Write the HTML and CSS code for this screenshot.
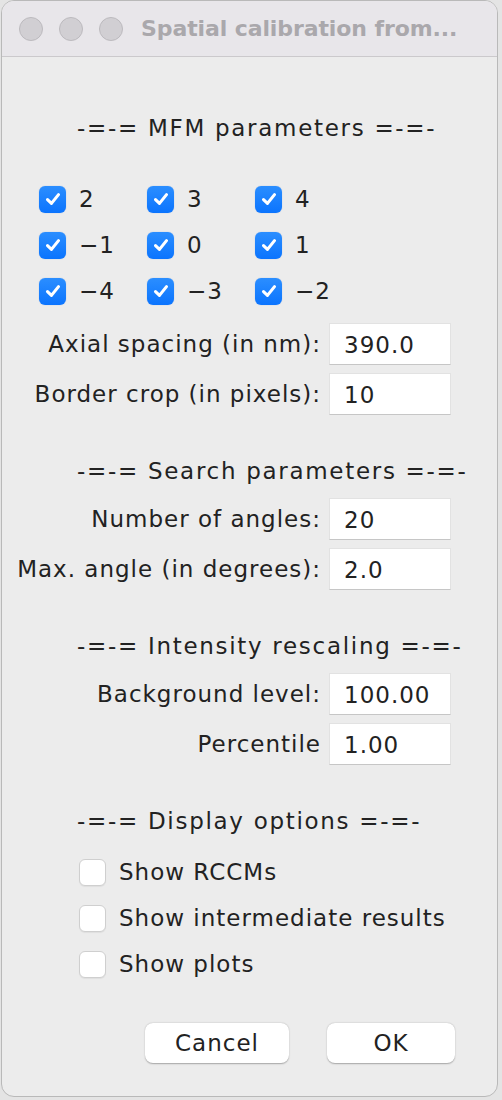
FILE: index.html
```html
<!DOCTYPE html>
<html>
<head>
<meta charset="utf-8">
<link rel="stylesheet" href="styles.css">
</head>
<body>
<div class="window">
  <div class="titlebar">
    <span class="light"></span><span class="light"></span><span class="light"></span>
    <span class="title">Spatial calibration from...</span>
  </div>
  <div class="content">
    <div class="heading h1">-=-= MFM parameters =-=-</div>
    <div class="checkgrid">
      <label class="cb"><span class="box on"><svg viewBox="0 0 20 20"><path d="M5 10.5 L8.6 14 L15 6" /></svg></span>2</label>
      <label class="cb"><span class="box on"><svg viewBox="0 0 20 20"><path d="M5 10.5 L8.6 14 L15 6" /></svg></span>3</label>
      <label class="cb"><span class="box on"><svg viewBox="0 0 20 20"><path d="M5 10.5 L8.6 14 L15 6" /></svg></span>4</label>
      <label class="cb"><span class="box on"><svg viewBox="0 0 20 20"><path d="M5 10.5 L8.6 14 L15 6" /></svg></span>−1</label>
      <label class="cb"><span class="box on"><svg viewBox="0 0 20 20"><path d="M5 10.5 L8.6 14 L15 6" /></svg></span>0</label>
      <label class="cb"><span class="box on"><svg viewBox="0 0 20 20"><path d="M5 10.5 L8.6 14 L15 6" /></svg></span>1</label>
      <label class="cb"><span class="box on"><svg viewBox="0 0 20 20"><path d="M5 10.5 L8.6 14 L15 6" /></svg></span>−4</label>
      <label class="cb"><span class="box on"><svg viewBox="0 0 20 20"><path d="M5 10.5 L8.6 14 L15 6" /></svg></span>−3</label>
      <label class="cb"><span class="box on"><svg viewBox="0 0 20 20"><path d="M5 10.5 L8.6 14 L15 6" /></svg></span>−2</label>
    </div>
    <div class="fields f1">
      <span class="lbl">Axial spacing (in nm):</span><span class="field">390.0</span>
      <span class="lbl">Border crop (in pixels):</span><span class="field">10</span>
    </div>
    <div class="heading h2">-=-= Search parameters =-=-</div>
    <div class="fields">
      <span class="lbl">Number of angles:</span><span class="field">20</span>
      <span class="lbl">Max. angle (in degrees):</span><span class="field">2.0</span>
    </div>
    <div class="heading h2">-=-= Intensity rescaling =-=-</div>
    <div class="fields">
      <span class="lbl">Background level:</span><span class="field">100.00</span>
      <span class="lbl">Percentile</span><span class="field">1.00</span>
    </div>
    <div class="heading h2">-=-= Display options =-=-</div>
    <div class="options">
      <label class="cb"><span class="box off"></span>Show RCCMs</label>
      <label class="cb"><span class="box off"></span>Show intermediate results</label>
      <label class="cb"><span class="box off"></span>Show plots</label>
    </div>
    <div class="buttons">
      <span class="btn cancel">Cancel</span>
      <span class="btn ok">OK</span>
    </div>
  </div>
</div>
</body>
</html>
```
FILE: styles.css
```css
html, body {
  margin: 0;
  padding: 0;
  background: #e4e4e4;
}
body {
  width: 502px;
  height: 1100px;
  overflow: hidden;
  font-family: "DejaVu Sans", "Noto Sans", sans-serif;
  color: #222;
}
.window {
  margin-left: 1px;
  width: 497px;
  height: 1097px;
  background: #ececec;
  border: 1px solid #b9b9b9;
  border-radius: 13px;
  overflow: hidden;
  box-sizing: border-box;
  display: flex;
  flex-direction: column;
}
.titlebar {
  height: 56px;
  flex: none;
  background: #e8e6ea;
  border-bottom: 1px solid #cbc9cc;
  box-sizing: border-box;
  display: flex;
  align-items: center;
  padding-left: 17px;
}
.light {
  width: 24px;
  height: 24px;
  border-radius: 50%;
  background: #d1cfd3;
  border: 1px solid #bcbabe;
  box-sizing: border-box;
  margin-right: 16px;
}
.title {
  margin-left: 2px;
  font-weight: bold;
  font-size: 22px;
  color: #aaa8ac;
  letter-spacing: -0.1px;
}
.content {
  display: flex;
  flex-direction: column;
  font-size: 23px;
  letter-spacing: 1px;
}
.heading {
  height: 30px;
  line-height: 30px;
  padding-left: 75px;
  letter-spacing: 1.7px;
}
.h1 { margin-top: 56px; }
.h2 { margin-top: 41px; }
.checkgrid {
  margin-top: 33px;
  display: grid;
  grid-template-columns: 108px 108px 108px;
  grid-auto-rows: 46px;
  padding-left: 37px;
}
.cb {
  display: flex;
  align-items: center;
  height: 46px;
}
.box {
  width: 27px;
  height: 27px;
  border-radius: 6px;
  box-sizing: border-box;
  margin-right: 13px;
  flex: none;
  display: flex;
  align-items: center;
  justify-content: center;
}
.box.on {
  background: linear-gradient(#2b8eff, #0b74fe);
  box-shadow: 0 0 1px rgba(0, 80, 200, 0.4);
}
.box svg {
  width: 22px;
  height: 22px;
}
.box svg path {
  fill: none;
  stroke: #fff;
  stroke-width: 2.8;
  stroke-linecap: round;
  stroke-linejoin: round;
}
.box.off {
  background: #fff;
  border: 1px solid #cfcfcf;
  box-shadow: 0 1px 1px rgba(0, 0, 0, 0.06);
}
.fields {
  margin-top: 12px;
  display: grid;
  grid-template-columns: 1fr 122px;
  grid-auto-rows: 42px;
  row-gap: 8px;
  column-gap: 9px;
  padding-right: 46px;
  align-items: center;
}
.f1 { margin-top: 9px; }
.lbl {
  text-align: right;
  margin-right: -1px;
}
.field {
  height: 42px;
  line-height: 42px;
  background: #fff;
  border: 1px solid #e2e2e2;
  border-bottom-color: #c6c6c6;
  box-sizing: border-box;
  padding-left: 14px;
}
.options {
  margin-top: 13px;
  padding-left: 77px;
  display: flex;
  flex-direction: column;
}
.buttons {
  margin-top: 36px;
  display: flex;
  padding-left: 143px;
}
.btn {
  height: 40px;
  line-height: 40px;
  background: #fff;
  border-radius: 8px;
  text-align: center;
  box-shadow: 0 0.5px 1.5px rgba(0, 0, 0, 0.3);
}
.cancel { width: 144px; }
.ok { width: 128px; margin-left: 38px; }
```
